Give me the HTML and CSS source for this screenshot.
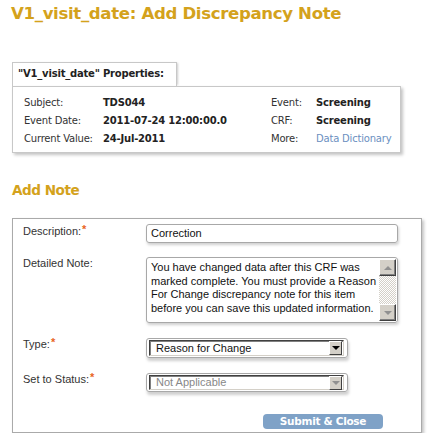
FILE: index.html
```html
<!DOCTYPE html>
<html>
<head>
<meta charset="utf-8">
<link rel="stylesheet" href="styles.css">
</head>
<body>
<div class="page">
  <h1 class="title">V1_visit_date: Add Discrepancy Note</h1>

  <div class="props">
    <div class="tab">"V1_visit_date" Properties:</div>
    <div class="props-panel">
      <div class="props-grid">
        <span class="pl">Subject:</span><span class="pv">TDS044</span><span class="pl">Event:</span><span class="pv">Screening</span>
        <span class="pl">Event Date:</span><span class="pv">2011-07-24 12:00:00.0</span><span class="pl">CRF:</span><span class="pv">Screening</span>
        <span class="pl">Current Value:</span><span class="pv">24-Jul-2011</span><span class="pl">More:</span><span class="link">Data Dictionary</span>
      </div>
    </div>
  </div>

  <h2 class="subtitle">Add Note</h2>

  <div class="form-panel">
    <div class="row row-desc">
      <div class="label">Description:<span class="req">*</span></div>
      <div class="text-input">Correction</div>
    </div>
    <div class="row row-note">
      <div class="label">Detailed Note:</div>
      <div class="textarea">
        <div class="ta-text">You have changed data after this CRF was<br>marked complete. You must provide a Reason<br>For Change discrepancy note for this item<br>before you can save this updated information.</div>
        <div class="scrollbar">
          <div class="sb-btn"><span class="tri-up"></span></div>
          <div class="sb-track"></div>
          <div class="sb-btn"><span class="tri-down"></span></div>
        </div>
      </div>
    </div>
    <div class="row row-type">
      <div class="label">Type:<span class="req">*</span></div>
      <div class="select-wrap">
        <div class="select">
          <span class="sel-text">Reason for Change</span>
          <span class="sel-btn"><span class="tri-down dark"></span></span>
        </div>
      </div>
    </div>
    <div class="row row-status">
      <div class="label">Set to Status:<span class="req">*</span></div>
      <div class="select-wrap">
        <div class="select disabled">
          <span class="sel-text">Not Applicable</span>
          <span class="sel-btn"><span class="tri-down"></span></span>
        </div>
      </div>
    </div>
    <div class="actions">
      <div class="button">Submit &amp; Close</div>
    </div>
  </div>
</div>
</body>
</html>
```

FILE: styles.css
```css
html, body {
  margin: 0;
  padding: 0;
  background: #fff;
}
.page {
  padding: 0 0 0 12px;
  width: 412px;
}
.title {
  margin: 0 0 0 -1px;
  padding-top: 4px;
  height: 62px;
  box-sizing: border-box;
  font-family: "DejaVu Sans", sans-serif;
  font-weight: bold;
  font-size: 16.6px;
  letter-spacing: -0.35px;
  line-height: 20px;
  color: #d4a21c;
}
.props {
  width: 389px;
  font-family: "DejaVu Sans", sans-serif;
  font-size: 10px;
  color: #333;
}
.tab {
  display: inline-block;
  box-sizing: border-box;
  width: 165px;
  height: 24px;
  border: 1px solid #c8c8c8;
  border-bottom: none;
  padding: 5px 0 0 5px;
  font-weight: bold;
  font-size: 10px;
  letter-spacing: -0.2px;
  color: #222;
  box-shadow: 2px 0 2px -1px #ccc;
  vertical-align: top;
}
.props-panel {
  border: 1px solid #c8c8c8;
  box-shadow: 2px 2px 3px #c4c4c4;
  padding: 6px 0 5px 11px;
  height: 54px;
}
.props-grid {
  display: grid;
  grid-template-columns: 79px 168px 45px auto;
  grid-auto-rows: 18px;
  align-items: center;
  letter-spacing: -0.2px;
}
.pv {
  font-weight: bold;
  color: #222;
}
.link {
  color: #6b8fbf;
}
.subtitle {
  margin: 0;
  height: 65px;
  padding-top: 28px;
  box-sizing: border-box;
  font-family: "DejaVu Sans", sans-serif;
  font-weight: bold;
  font-size: 13.6px;
  letter-spacing: -0.5px;
  line-height: 18px;
  color: #d4a21c;
}
.form-panel {
  width: 410px;
  height: 215px;
  box-sizing: border-box;
  border: 1px solid #aaa;
  box-shadow: 2px 2px 3px #c4c4c4;
  padding: 5px 0 0 10px;
  font-family: "Liberation Sans", Arial, sans-serif;
  font-size: 11px;
  color: #333;
}
.row {
  display: flex;
  align-items: flex-start;
}
.label {
  width: 123px;
  line-height: 13px;
  padding-top: 1px;
}
.req {
  color: #e8641e;
  font-weight: bold;
  position: relative;
  top: -2px;
  margin-left: 1px;
}
.row-desc { height: 33px; }
.row-note { height: 81px; }
.row-type { height: 35px; }
.row-status { height: 41px; }
.row-note .label { padding-top: 0; }
.row-type .label, .row-status .label { padding-top: 0; }

.text-input {
  box-sizing: border-box;
  width: 252px;
  height: 19px;
  border: 1px solid #a8a8a8;
  border-radius: 3px;
  box-shadow: 1px 2px 3px #d0d0d0;
  padding: 2px 0 0 4px;
  line-height: 13px;
  color: #111;
}
.textarea {
  box-sizing: border-box;
  width: 252px;
  height: 66px;
  border: 1px solid #a8a8a8;
  border-radius: 3px;
  box-shadow: 1px 2px 3px #d0d0d0;
  display: flex;
  padding: 1px 1px 1px 0;
}
.ta-text {
  flex: 1;
  padding: 2px 0 0 4px;
  line-height: 13.6px;
  color: #111;
  white-space: nowrap;
  overflow: hidden;
}
.scrollbar {
  width: 17px;
  display: flex;
  flex-direction: column;
}
.sb-btn {
  box-sizing: border-box;
  height: 17px;
  background: #d4d0c8;
  border: 1px solid;
  border-color: #fff #404040 #404040 #fff;
  box-shadow: inset -1px -1px 0 #808080;
  display: flex;
  align-items: center;
  justify-content: center;
}
.sb-track {
  flex: 1;
  background: repeating-conic-gradient(#fff 0 25%, #d4d0c8 0 50%) 0 0 / 2px 2px;
}
.tri-up {
  width: 0;
  height: 0;
  border-left: 4px solid transparent;
  border-right: 4px solid transparent;
  border-bottom: 4px solid #909090;
}
.tri-down {
  width: 0;
  height: 0;
  border-left: 4px solid transparent;
  border-right: 4px solid transparent;
  border-top: 4px solid #909090;
}
.tri-down.dark {
  border-top-color: #000;
}
.select-wrap {
  box-sizing: border-box;
  width: 202px;
  height: 20px;
  border: 1px solid #a8a8a8;
  border-radius: 3px;
  box-shadow: 1px 3px 3px #d0d0d0;
  padding: 1px 3px 1px 2px;
}
.row-status .select-wrap { height: 19px; }
.select {
  box-sizing: border-box;
  height: 100%;
  border: 1px solid;
  border-color: #404040 #d4d0c8 #d4d0c8 #404040;
  box-shadow: inset 1px 1px 0 #808080;
  display: flex;
  align-items: center;
  padding-left: 6px;
  padding-right: 1px;
  background: #fff;
}
.sel-text {
  flex: 1;
  color: #111;
  line-height: 13px;
}
.select.disabled .sel-text { color: #888; }
.sel-btn {
  box-sizing: border-box;
  width: 13px;
  height: 14px;
  background: #d4d0c8;
  border: 1px solid;
  border-color: #fff #404040 #404040 #fff;
  display: flex;
  align-items: center;
  justify-content: center;
}
.actions {
  display: flex;
  padding-left: 240px;
}
.button {
  box-sizing: border-box;
  width: 120px;
  height: 15px;
  border-radius: 4px;
  background: #7fa2c7;
  color: #fff;
  font-family: "DejaVu Sans", sans-serif;
  font-weight: bold;
  font-size: 10.5px;
  letter-spacing: -0.3px;
  line-height: 15px;
  text-align: center;
}
```
